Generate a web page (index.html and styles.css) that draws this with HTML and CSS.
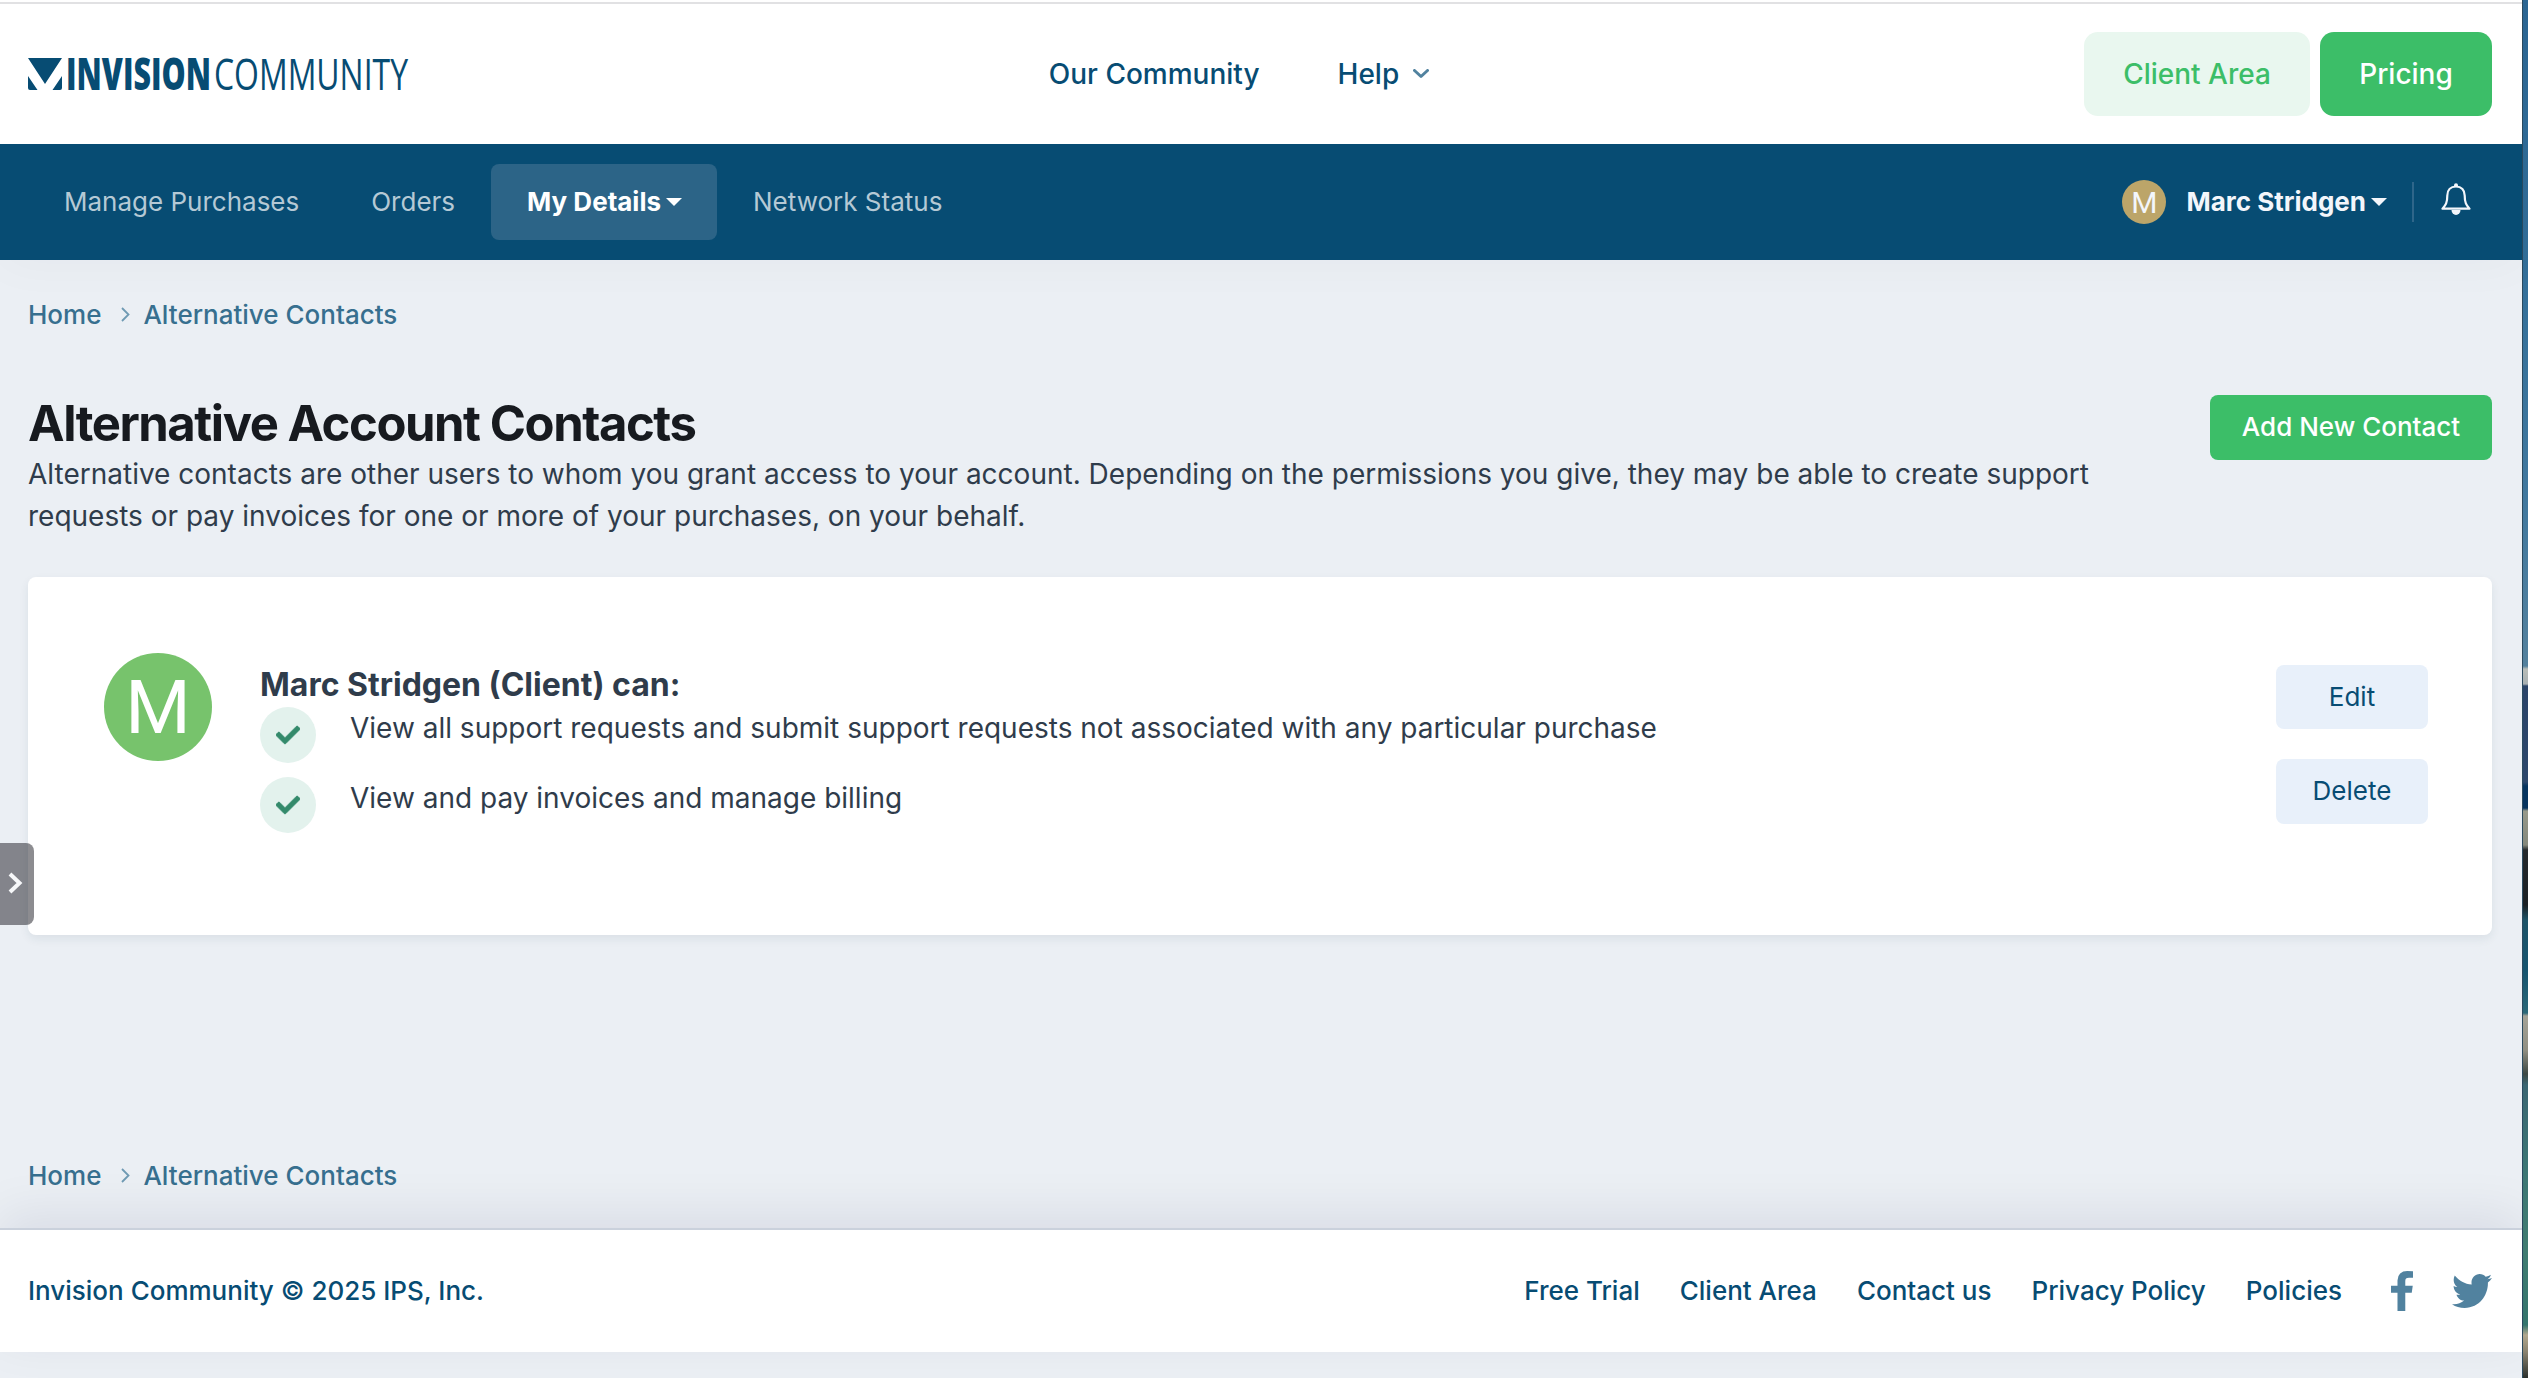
FILE: index.html
```
<!DOCTYPE html>
<html lang="en">
<head>
    <meta charset="UTF-8">
    <meta name="viewport" content="width=device-width, initial-scale=1.0">
    <title>Alternative Contacts - Invision Community</title>
    <link rel="stylesheet" href="styles.css">
</head>
<body>

<div class="page">
    <header class="site-header">
        <a class="logo" href="#">
            <svg width="400" height="64" viewBox="0 -12 400 64">
                <path d="M0 4h34L17 30zM0 22l9.500 14H2q-2 0-2-2zM34 22v12q0 2-2 2h-7.500z" fill="#074c73"/>
                <text class="logo-bold" x="38" y="36" textLength="145" lengthAdjust="spacingAndGlyphs">INVISION</text>
                <text class="logo-light" x="186" y="36" textLength="194" lengthAdjust="spacingAndGlyphs">COMMUNITY</text>
            </svg>
        </a>
        <nav class="site-nav">
            <a href="#">Our Community</a>
            <a href="#">Help
                <svg class="chevron" width="16" height="10" viewBox="0 0 16 10"><path d="M1.500 1.500L8 7.500l6.500-6" fill="none" stroke="#51829f" stroke-width="3" stroke-linecap="round" stroke-linejoin="round"/></svg>
            </a>
        </nav>
        <div class="site-actions">
            <a class="btn-light" href="#">Client Area</a>
            <a class="btn-pricing" href="#">Pricing</a>
        </div>
    </header>

    <div class="client-bar">
        <ul class="client-nav">
            <li><a href="#">Manage Purchases</a></li>
            <li><a href="#">Orders</a></li>
            <li><a class="active" href="#">My Details <span class="caret"></span></a></li>
            <li><a href="#">Network Status</a></li>
        </ul>
        <div class="user-nav">
            <span class="avatar-small">M</span>
            <a class="user-name" href="#">Marc Stridgen <span class="caret"></span></a>
            <a class="bell" href="#">
                <svg width="30" height="34" viewBox="0 0 30 34"><path d="M15 3.500C9.500 3.500 6.300 7 6.300 12.500c0 7-1.500 9.500-4.800 13.200h27C25.200 22 23.700 19.500 23.700 12.500 23.700 7 20.500 3.500 15 3.500z" fill="none" stroke="#f3f6fb" stroke-width="2.200" stroke-linejoin="round"/><circle cx="15" cy="2.200" r="2" fill="#f3f6fb"/><path d="M10.500 27h9a4.500 5 0 0 1-9 0z" fill="#f3f6fb"/></svg>
            </a>
        </div>
    </div>

    <main>
        <ul class="breadcrumb">
            <li><a href="#">Home</a></li>
            <li><svg width="9" height="15" viewBox="0 0 9 15"><path d="M1 1l6.500 6.500L1 14" fill="none" stroke="#6f9ab3" stroke-width="1.800"/></svg></li>
            <li><a href="#">Alternative Contacts</a></li>
        </ul>

        <div class="page-head">
            <div class="page-title">
                <h1>Alternative Account Contacts</h1>
                <p>Alternative contacts are other users to whom you grant access to your account. Depending on the permissions you give, they may be able to create support<br>requests or pay invoices for one or more of your purchases, on your behalf.</p>
            </div>
            <a class="btn-add" href="#">Add New Contact</a>
        </div>

        <section class="contact-card">
            <span class="avatar">M</span>
            <div class="contact-info">
                <h2>Marc Stridgen (Client) can:</h2>
                <ul class="permissions">
                    <li>
                        <span class="check"><svg width="24" height="24" viewBox="0 0 512 512"><path d="M173.900 439.400l-166.400-166.400c-10-10-10-26.200 0-36.200l36.200-36.200c10-10 26.200-10 36.200 0L192 312.700 432.100 72.600c10-10 26.200-10 36.200 0l36.200 36.200c10 10 10 26.200 0 36.200l-294.400 294.400c-10 10-26.200 10-36.200 0z" fill="#338a6b" stroke="#338a6b" stroke-width="14"/></svg></span>
                        <span>View all support requests and submit support requests not associated with any particular purchase</span>
                    </li>
                    <li>
                        <span class="check"><svg width="24" height="24" viewBox="0 0 512 512"><path d="M173.900 439.400l-166.400-166.400c-10-10-10-26.200 0-36.200l36.200-36.200c10-10 26.200-10 36.200 0L192 312.700 432.100 72.600c10-10 26.200-10 36.200 0l36.200 36.200c10 10 10 26.200 0 36.200l-294.400 294.400c-10 10-26.200 10-36.200 0z" fill="#338a6b" stroke="#338a6b" stroke-width="14"/></svg></span>
                        <span>View and pay invoices and manage billing</span>
                    </li>
                </ul>
            </div>
            <div class="contact-actions">
                <a href="#">Edit</a>
                <a href="#">Delete</a>
            </div>
        </section>

        <ul class="breadcrumb breadcrumb-bottom">
            <li><a href="#">Home</a></li>
            <li><svg width="9" height="15" viewBox="0 0 9 15"><path d="M1 1l6.500 6.500L1 14" fill="none" stroke="#6f9ab3" stroke-width="1.800"/></svg></li>
            <li><a href="#">Alternative Contacts</a></li>
        </ul>
    </main>

    <footer>
        <p>Invision Community © 2025 IPS, Inc.</p>
        <div class="footer-links">
            <a href="#">Free Trial</a>
            <a href="#">Client Area</a>
            <a href="#">Contact us</a>
            <a href="#">Privacy Policy</a>
            <a href="#">Policies</a>
            <a class="facebook" href="#"><svg width="22" height="40" viewBox="95 0 864 1664" preserveAspectRatio="none"><path d="M959 12v264H802q-86 0-116 36t-30 108v189h293l-39 296H656v759H350V905H95V609h255V391q0-186 104-288.500T731 0q147 0 228 12z" fill="#51829f"/></svg></a>
            <a class="twitter" href="#"><svg width="40" height="34" viewBox="0 48 512 416" preserveAspectRatio="none"><path d="M459.370 151.716c.325 4.548.325 9.097.325 13.645 0 138.720-105.583 298.558-298.558 298.558-59.452 0-114.680-17.219-161.137-47.106 8.447.974 16.568 1.299 25.340 1.299 49.055 0 94.213-16.568 130.274-44.832-46.132-.975-84.792-31.188-98.112-72.772 6.498.974 12.995 1.624 19.818 1.624 9.421 0 18.843-1.300 27.614-3.573-48.081-9.747-84.143-51.980-84.143-102.985v-1.299c13.969 7.797 30.214 12.670 47.431 13.319-28.264-18.843-46.781-51.005-46.781-87.391 0-19.492 5.197-37.360 14.294-52.954 51.655 63.675 129.300 105.258 216.365 109.807-1.624-7.797-2.599-15.918-2.599-24.040 0-57.828 46.782-104.934 104.934-104.934 30.213 0 57.502 12.670 76.670 33.137 23.715-4.548 46.456-13.320 66.599-25.340-7.798 24.366-24.366 44.833-46.132 57.827 21.117-2.273 41.584-8.122 60.426-16.243-14.292 20.791-32.161 39.308-52.628 54.253z" fill="#51829f"/></svg></a>
        </div>
    </footer>

    <a class="side-tab" href="#">
        <svg width="15" height="22" viewBox="0 0 15 22"><path d="M2 2l9.500 9L2 20" fill="none" stroke="#f7f8fa" stroke-width="4"/></svg>
    </a>
</div>
<div class="desktop-edge"></div>

</body>
</html>
```
FILE: styles.css
```
* {
    box-sizing: border-box;
}

body {
    margin: 0;
    display: flex;
    height: 1378px;
    overflow: hidden;
    background-color: #ebeff4;
    color: #2f3c4b;
    font-family: Inter, "Liberation Sans", sans-serif;
    font-size: 28px;
}

a {
    color: #074c73;
    text-decoration: none;
}

ul {
    list-style: none;
    margin: 0;
    padding: 0;
}

h1, h2, p {
    margin: 0;
}

svg {
    display: block;
}

.page {
    position: relative;
    display: flex;
    flex-direction: column;
    width: 2522px;
    height: 1378px;
}

/* Header */
.site-header {
    position: relative;
    z-index: 1;
    display: grid;
    grid-template-columns: 1fr auto 1fr;
    align-items: center;
    height: 144px;
    padding: 4px 30px 0 28px;
    background: linear-gradient(#fff 2px, #e1e1e3 2px, #e1e1e3 4px, #fff 4px);
}

.logo-bold,
.logo-light {
    fill: #074c73;
    font-family: "Open Sans", "Liberation Sans", sans-serif;
    font-size: 44px;
    font-weight: 800;
}

.logo-light {
    font-weight: 400;
}

.site-nav {
    display: flex;
    gap: 78px;
    margin-right: 42px;
    font-weight: 500;
}

.site-nav a {
    display: flex;
    align-items: center;
    gap: 14px;
}

.site-actions {
    display: flex;
    justify-content: flex-end;
    gap: 10px;
    margin-left: -42px;
    font-weight: 500;
}

.btn-light,
.btn-pricing {
    width: 226px;
    height: 84px;
    line-height: 84px;
    border-radius: 14px;
    text-align: center;
    background-color: #e9f7ef;
    color: #3cbe68;
}

.btn-pricing {
    width: 172px;
    background-color: #3cbe68;
    color: #fff;
}

/* Client bar */
.client-bar {
    display: flex;
    justify-content: space-between;
    align-items: center;
    height: 116px;
    padding: 0 51px 0 28px;
    background-color: #074c73;
    box-shadow: 0 4px 50px rgba(0, 0, 60, 0.03);
    font-size: 26px;
}

.client-nav {
    display: flex;
}

.client-nav a {
    display: flex;
    align-items: center;
    height: 76px;
    padding: 0 36px 2px;
    border-radius: 8px;
    color: #b5c9d5;
}

.client-nav .active {
    background-color: #2c6487;
    color: #fff;
    font-weight: 700;
}

.caret {
    margin-left: 5px;
    margin-top: 2px;
    border: 8px solid transparent;
    border-top-color: currentColor;
    border-bottom: 0;
}

.client-nav .active .caret {
    margin-right: -1px;
}

.user-nav {
    display: flex;
    align-items: center;
}

.avatar-small {
    width: 44px;
    height: 44px;
    margin-right: 20px;
    border-radius: 50%;
    background-color: #bca569;
    color: #f3f6fb;
    font-family: Roboto, sans-serif;
    font-size: 30px;
    line-height: 45px;
    text-align: center;
}

.user-name {
    display: flex;
    align-items: center;
    margin-right: 25px;
    padding-bottom: 2px;
    color: #f3f6fb;
    font-weight: 700;
}

.bell {
    display: flex;
    align-items: center;
    height: 40px;
    padding: 0 0 4px 27px;
    border-left: 2px solid #2f668a;
}

/* Content */
main {
    flex: 1;
    padding: 0 30px 0 28px;
}

.breadcrumb {
    display: flex;
    align-items: center;
    margin-top: 38px;
    height: 32px;
    font-size: 26px;
    font-weight: 500;
}

.breadcrumb a {
    color: #376f8f;
}

.breadcrumb svg {
    margin: 0 13px 0 20px;
}

.page-head {
    display: flex;
    justify-content: space-between;
    align-items: flex-start;
    margin-top: 65px;
}

.page-title h1 {
    color: #171a1f;
    font-size: 49px;
    font-weight: 700;
    line-height: 58px;
    letter-spacing: -1.45px;
}

.page-title p {
    line-height: 42px;
    white-space: nowrap;
}

.btn-add {
    width: 282px;
    height: 65px;
    border-radius: 8px;
    background-color: #3cbe68;
    color: #fff;
    font-size: 26px;
    font-weight: 500;
    line-height: 64px;
    text-align: center;
}

.contact-card {
    display: flex;
    height: 358px;
    margin-top: 40px;
    padding: 76px 64px 0 76px;
    border-radius: 8px;
    background-color: #fff;
    box-shadow: 0 4px 10px rgba(20, 60, 80, 0.08);
}

.avatar {
    width: 108px;
    height: 108px;
    border-radius: 50%;
    background-color: #77c36c;
    color: #fff;
    font-family: Roboto, sans-serif;
    font-size: 75px;
    line-height: 109px;
    text-align: center;
}

.contact-info {
    flex: 1;
    padding-top: 10px;
    margin-left: 48px;
}

.contact-info h2 {
    margin-bottom: 1px;
    font-size: 32px;
    font-weight: 700;
    line-height: 43px;
}

.permissions li {
    display: flex;
    gap: 34px;
    height: 70px;
    line-height: 42px;
}

.check {
    display: flex;
    align-items: center;
    justify-content: center;
    width: 56px;
    height: 56px;
    border-radius: 50%;
    background-color: #e3f2ed;
}

.contact-actions {
    display: flex;
    flex-direction: column;
    gap: 30px;
    padding-top: 12px;
}

.contact-actions a {
    width: 152px;
    height: 64px;
    border-radius: 8px;
    background-color: #e8f0fa;
    font-size: 26px;
    line-height: 64px;
    text-align: center;
}

.contact-actions a:last-child {
    height: 65px;
}

.breadcrumb-bottom {
    margin-top: 224px;
}

/* Footer */
footer {
    display: flex;
    justify-content: space-between;
    align-items: center;
    height: 124px;
    margin-bottom: 26px;
    padding: 0 30px 0 28px;
    border-top: 2px solid #cad1dc;
    background-color: #fff;
    box-shadow: 0 -14px 50px rgba(0, 0, 60, 0.08);
    color: #074c73;
    font-size: 26px;
    font-weight: 500;
}

footer p {
    padding-bottom: 2px;
}

.footer-links {
    display: flex;
    align-items: center;
    gap: 40px;
}

.footer-links a {
    padding-bottom: 2px;
}

.footer-links .facebook,
.footer-links .twitter {
    padding-bottom: 0;
}

.facebook {
    margin-left: 9px;
}

.twitter {
    margin-left: -1px;
}

.side-tab {
    position: absolute;
    top: 843px;
    left: 0;
    display: flex;
    align-items: center;
    width: 34px;
    height: 82px;
    padding: 0 0 2px 8px;
    border-radius: 0 8px 8px 0;
    background-color: rgba(38, 37, 45, 0.53);
}

/* Wallpaper showing beside the window */
.desktop-edge {
    width: 6px;
    height: 1378px;
    border-left: 1px solid #2a4a60;
    background: linear-gradient(#2b6592 0, #336f99 280px, #41789e 500px, #54819d 666px, #b9bdb8 669px, #a9b0b2 684px, #2b4469 686px, #2c476b 782px, #06345f 786px, #06345f 808px, #989a8b 811px, #85887b 845px, #25292c 850px, #1b2024 905px, #1d5367 920px, #16546f 970px, #2b6878 1013px, #a5a397 1016px, #918f82 1050px, #3d4843 1074px, #3b6672 1085px, #3b7474 1160px, #438174 1250px, #36786f 1325px, #b5ab90 1335px, #8c8470 1352px, #2b302c 1378px);
}
```
